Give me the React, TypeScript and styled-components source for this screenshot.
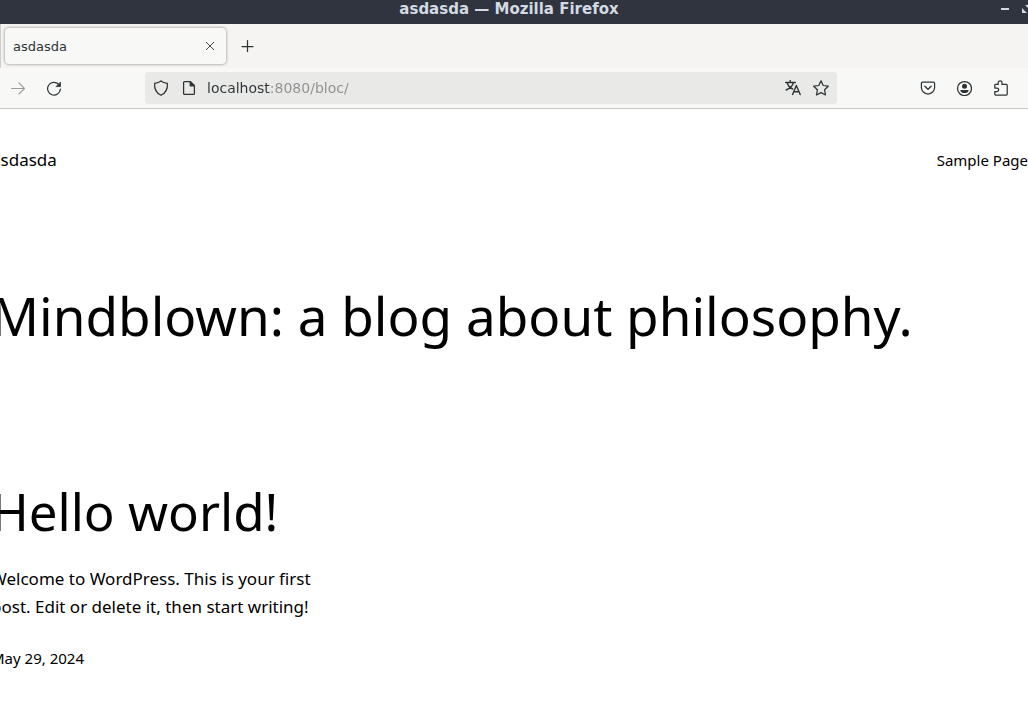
import React from "react";
import styled, { createGlobalStyle } from "styled-components";

const GlobalStyle = createGlobalStyle`
  * { box-sizing: border-box; }
  body {
    margin: 0;
    background: #fff;
    color: #000;
    font-family: "Noto Sans", sans-serif;
    overflow: hidden;
  }
  button, input { font: inherit; color: inherit; }
`;

const Chrome = styled.div`
  font-family: "DejaVu Sans", sans-serif;
  font-size: 14px;
  color: #2e3436;
`;

const TitleBar = styled.div`
  display: grid;
  grid-template-columns: 1fr auto 1fr;
  height: 24px;
  padding-bottom: 6px;
  align-items: center;
  background: #2f343f;
  color: #d3dae3;
`;

const WindowTitle = styled.div`
  grid-column: 2;
  padding-right: 10px;
  font-size: 15px;
  font-weight: bold;
  line-height: 18px;
`;

const WindowButtons = styled.div`
  display: flex;
  justify-content: flex-end;
  gap: 12px;
  overflow: hidden;
`;

const IconButton = styled.button<{ $w: number; $h: number }>`
  flex: none;
  display: flex;
  align-items: center;
  justify-content: center;
  width: ${(p) => p.$w}px;
  height: ${(p) => p.$h}px;
  padding: 0;
  border: 0;
  background: none;

  &:disabled { opacity: 0.45; }
`;

const TabStrip = styled.div`
  display: flex;
  align-items: center;
  height: 44px;
  padding-left: 4px;
  gap: 4px;
  background: #f6f4f2;
  border-left: 1px solid #cfccc9;
`;

const Tab = styled.div`
  display: flex;
  align-items: center;
  justify-content: space-between;
  width: 221px;
  height: 36px;
  padding: 0 4px 0 8px;
  border-radius: 4px;
  background: #f8f8f7;
  box-shadow: 0 0 3px rgba(0, 0, 0, 0.5);
`;

const TabLabel = styled.span`
  font-size: 13px;
`;

const Toolbar = styled.div`
  display: flex;
  align-items: center;
  height: 41px;
  padding-right: 9px;
  background: #f8f8f7;
  border-bottom: 1px solid #c8c8c0;
`;

const UrlBar = styled.div`
  flex: 1;
  display: flex;
  align-items: center;
  min-width: 0;
  height: 32px;
  margin: 0 73px;
  padding: 0 2px;
  border-radius: 4px;
  background: #e9e9e8;
`;

const UrlInput = styled.input`
  flex: 1;
  min-width: 0;
  height: 24px;
  margin-left: 4px;
  padding: 0;
  border: 0;
  outline: 0;
  background: linear-gradient(to right, #2e3436 63px, #8d9090 63px);
  background-clip: text;
  -webkit-text-fill-color: transparent;
`;

const Page = styled.div`
  margin-left: -9px;
`;

const SiteHeader = styled.header`
  display: flex;
  align-items: center;
  justify-content: space-between;
  padding: 37px 0;
`;

const SiteTitle = styled.a`
  font-size: 17px;
  line-height: 28px;
  color: inherit;
  text-decoration: none;
`;

const NavLink = styled.a`
  font-size: 15px;
  line-height: 28px;
  color: inherit;
  text-decoration: none;
`;

const Headline = styled.h1`
  margin: 71px 0 0;
  font-size: 53px;
  font-weight: 400;
  line-height: 68px;
  white-space: nowrap;
`;

const Post = styled.article`
  width: 340px;
  margin-top: 131px;
`;

const PostTitle = styled.h2`
  margin: 0 0 24px;
  font-size: 51px;
  font-weight: 400;
  line-height: 60px;
  white-space: nowrap;
`;

const Excerpt = styled.p`
  margin: 0 0 24px;
  font-size: 17px;
  line-height: 28px;
`;

const PostDate = styled.time`
  display: block;
  font-size: 15px;
  line-height: 26px;
`;

const Icon = ({ children }: { children: React.ReactNode }) => (
  <svg
    width="16"
    height="16"
    viewBox="0 0 16 16"
    fill="none"
    stroke="currentColor"
    strokeWidth="1.25"
    strokeLinecap="round"
    strokeLinejoin="round"
    aria-hidden="true"
  >
    {children}
  </svg>
);

export default function App() {
  return (
    <>
      <GlobalStyle />
      <Chrome>
        <TitleBar>
          <WindowTitle>asdasda — Mozilla Firefox</WindowTitle>
          <WindowButtons>
            <IconButton $w={10} $h={18} aria-label="Minimize">
              <svg width="10" height="10" aria-hidden="true"><path d="M1 4h8v2H1z" fill="#d3dae3" /></svg>
            </IconButton>
            <IconButton $w={6} $h={18} aria-label="Maximize">
              <svg width="6" height="10" aria-hidden="true"><path d="M0 4l5 5H0zM3 1h3v3z" fill="#d3dae3" /></svg>
            </IconButton>
          </WindowButtons>
        </TitleBar>
        <TabStrip>
          <Tab>
            <TabLabel>asdasda</TabLabel>
            <IconButton $w={24} $h={24} aria-label="Close tab">
              <svg width="10" height="10" viewBox="0 0 10 10" stroke="currentColor" strokeWidth="0.9" aria-hidden="true"><path d="M1 1l8 8M9 1L1 9" /></svg>
            </IconButton>
          </Tab>
          <IconButton $w={36} $h={36} aria-label="New tab">
            <Icon><path d="M7.500 2.500v11M2 8.500h11" /></Icon>
          </IconButton>
        </TabStrip>
        <Toolbar>
          <IconButton $w={36} $h={32} aria-label="Forward" disabled>
            <Icon><path d="M1.500 8.500h13M9 3l5.500 5.500L9 14" strokeWidth="1.1" /></Icon>
          </IconButton>
          <IconButton $w={36} $h={32} aria-label="Reload">
            <Icon>
              <path d="M12.600 4.200A6.400 6.400 0 1 0 14.400 9.200" />
              <path d="M14.500 2.400v4.200h-4.200z" fill="currentColor" strokeWidth="0.8" />
            </Icon>
          </IconButton>
          <UrlBar>
            <IconButton $w={28} $h={28} aria-label="Tracking protection">
              <Icon><path d="M8 .9C6.500 2.300 4 3 1.600 3.300c-.3 4.700.9 9.500 6.400 12 5.500-2.500 6.700-7.300 6.400-12C12 3 9.500 2.300 8 .9z" /></Icon>
            </IconButton>
            <IconButton $w={28} $h={28} aria-label="Site information">
              <Icon>
                <path d="M3.600 1.600h5.800l4 4v7.800a1 1 0 0 1-1 1H3.600a1 1 0 0 1-1-1V2.600a1 1 0 0 1 1-1z" />
                <path d="M9.200 1.600v4.200h4.200z" fill="currentColor" />
              </Icon>
            </IconButton>
            <UrlInput aria-label="Address" defaultValue="localhost:8080/bloc/" spellCheck={false} />
            <IconButton $w={28} $h={28} aria-label="Translate page">
              <Icon>
                <path d="M.7 2.500h9.600M5.200.5v2M2.200 2.800c.8 3 3 5.200 5.400 6.200M8.400 2.800C7.500 6 4.500 8.700 1.200 10M7.600 14.500l3.700-9 3.900 9M8.900 11.700h5" strokeWidth="1.4" />
              </Icon>
            </IconButton>
            <IconButton $w={28} $h={28} aria-label="Bookmark this page">
              <Icon><path d="M8 .8l2.200 4.700 5.100.7-3.700 3.600.9 5.200L8 12.600 3.500 15l.9-5.200L.7 6.200l5.100-.7z" /></Icon>
            </IconButton>
          </UrlBar>
          <IconButton $w={36} $h={32} aria-label="Save to Pocket">
            <Icon><path d="M2.600 2.200h10.800a1.200 1.200 0 0 1 1.200 1.200v4a6.600 6.600 0 0 1-13.200 0v-4a1.200 1.200 0 0 1 1.200-1.200zM4.800 6.200L8 9.300l3.200-3.100" /></Icon>
          </IconButton>
          <IconButton $w={36} $h={32} aria-label="Account">
            <Icon>
              <circle cx="8.500" cy="8.500" r="7" />
              <circle cx="8.500" cy="6.300" r="2.500" fill="currentColor" stroke="none" />
              <path d="M4.300 9.900h8.400c0 1.700-1.700 3.200-4.200 3.200s-4.200-1.500-4.200-3.200z" fill="currentColor" stroke="none" />
            </Icon>
          </IconButton>
          <IconButton $w={37} $h={32} aria-label="Extensions">
            <Icon><path d="M5.200 4.400V2.700a1.900 1.900 0 0 1 3.800 0v1.700h4.400a.8.8 0 0 1 .8.800v9a.8.8 0 0 1-.8.800H2.600a.8.8 0 0 1-.8-.8v-2.700H4a1.700 1.700 0 0 0 0-3.400H1.800V5.200a.8.8 0 0 1 .8-.8z" /></Icon>
          </IconButton>
        </Toolbar>
      </Chrome>
      <Page>
        <SiteHeader>
          <SiteTitle href="#">asdasda</SiteTitle>
          <nav><NavLink href="#">Sample Page</NavLink></nav>
        </SiteHeader>
        <main>
          <Headline>Mindblown: a blog about philosophy.</Headline>
          <Post>
            <PostTitle>Hello world!</PostTitle>
            <Excerpt>Welcome to WordPress. This is your first post. Edit or delete it, then start writing!</Excerpt>
            <PostDate dateTime="2024-05-29">May 29, 2024</PostDate>
          </Post>
        </main>
      </Page>
    </>
  );
}
